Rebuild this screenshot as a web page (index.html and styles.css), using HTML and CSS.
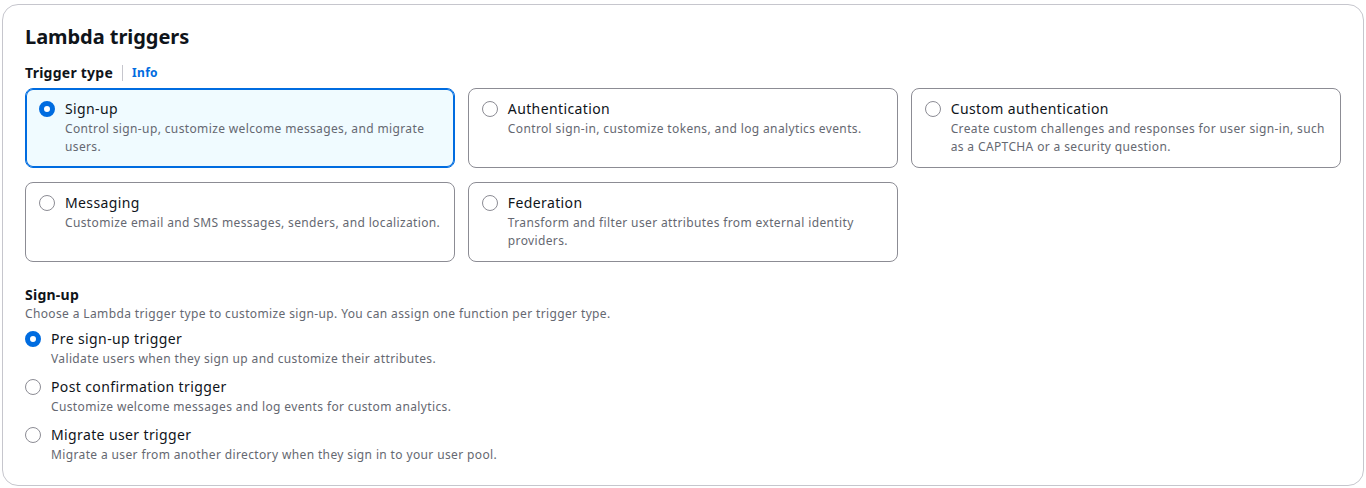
FILE: index.html
```html
<!DOCTYPE html>
<html lang="en">
<head>
<meta charset="utf-8">
<title>Lambda triggers</title>
<link rel="stylesheet" href="styles.css">
</head>
<body>
<section class="container">
  <h2 class="title">Lambda triggers</h2>
  <div class="field-label">
    <span class="label-text">Trigger type</span>
    <span class="divider"></span>
    <a class="info" href="#">Info</a>
  </div>
  <div class="tiles">
    <label class="tile selected">
      <span class="radio checked"></span>
      <span class="tile-body">
        <span class="tile-title">Sign-up</span>
        <span class="tile-desc">Control sign-up, customize welcome messages, and migrate users.</span>
      </span>
    </label>
    <label class="tile">
      <span class="radio"></span>
      <span class="tile-body">
        <span class="tile-title">Authentication</span>
        <span class="tile-desc">Control sign-in, customize tokens, and log analytics events.</span>
      </span>
    </label>
    <label class="tile">
      <span class="radio"></span>
      <span class="tile-body">
        <span class="tile-title">Custom authentication</span>
        <span class="tile-desc">Create custom challenges and responses for user sign-in, such as a CAPTCHA or a security question.</span>
      </span>
    </label>
    <label class="tile">
      <span class="radio"></span>
      <span class="tile-body">
        <span class="tile-title">Messaging</span>
        <span class="tile-desc">Customize email and SMS messages, senders, and localization.</span>
      </span>
    </label>
    <label class="tile">
      <span class="radio"></span>
      <span class="tile-body">
        <span class="tile-title">Federation</span>
        <span class="tile-desc">Transform and filter user attributes from external identity providers.</span>
      </span>
    </label>
  </div>

  <div class="group">
    <div class="group-title">Sign-up</div>
    <div class="group-desc">Choose a Lambda trigger type to customize sign-up. You can assign one function per trigger type.</div>
    <div class="options">
      <label class="option">
        <span class="radio checked"></span>
        <span class="tile-body">
          <span class="tile-title">Pre sign-up trigger</span>
          <span class="tile-desc">Validate users when they sign up and customize their attributes.</span>
        </span>
      </label>
      <label class="option">
        <span class="radio"></span>
        <span class="tile-body">
          <span class="tile-title">Post confirmation trigger</span>
          <span class="tile-desc">Customize welcome messages and log events for custom analytics.</span>
        </span>
      </label>
      <label class="option">
        <span class="radio"></span>
        <span class="tile-body">
          <span class="tile-title">Migrate user trigger</span>
          <span class="tile-desc">Migrate a user from another directory when they sign in to your user pool.</span>
        </span>
      </label>
    </div>
  </div>
</section>
</body>
</html>
```
FILE: styles.css
```css
* { box-sizing: border-box; }
html, body { margin: 0; padding: 0; background: #ffffff; }
body {
  font-family: "Noto Sans", "Open Sans", Arial, sans-serif;
  color: #0f141a;
  padding: 4px 2px 0 2px;
}
.container {
  border: 1px solid #c6c6cd;
  border-radius: 16px;
  padding: 20px 22px 18px 22px;
  height: 482px;
}
.title {
  margin: 0;
  font-size: 20px;
  line-height: 24px;
  font-weight: 700;
  letter-spacing: -0.05px;
}
.field-label {
  display: flex;
  align-items: center;
  margin-top: 13px;
  height: 22px;
}
.label-text {
  font-size: 14px;
  font-weight: 700;
  line-height: 22px;
  letter-spacing: 0.25px;
}
.divider {
  width: 1px;
  height: 16px;
  background: #c6c6cd;
  margin: 0 9px 0 9px;
}
.info {
  font-size: 12px;
  font-weight: 700;
  color: #006ce0;
  text-decoration: none;
  line-height: 22px;
  letter-spacing: 0.3px;
}
.tiles {
  margin-top: 4px;
  display: grid;
  grid-template-columns: repeat(3, 1fr);
  column-gap: 12.5px;
  row-gap: 14px;
}
.tile {
  display: flex;
  gap: 10px;
  border: 1px solid #8c8c94;
  border-radius: 8px;
  padding: 9px 13px 11px 13px;
  min-height: 80px;
  background: #fff;
}
.tile.selected {
  border-color: #006ce0;
  box-shadow: inset 0 0 0 1px #006ce0;
  background: #f0fbff;
}
.radio {
  flex: none;
  width: 16px;
  height: 16px;
  margin-top: 3px;
  border-radius: 50%;
  border: 1px solid #8c8c94;
  background: #fff;
}
.radio.checked {
  border: 5px solid #006ce0;
  background: #fff;
}
.tile-body {
  display: flex;
  flex-direction: column;
}
.tile-title {
  font-size: 14px;
  line-height: 22px;
  letter-spacing: 0.38px;
}
.tile-desc {
  font-size: 12px;
  line-height: 18px;
  color: #656871;
  letter-spacing: 0.37px;
}
.group {
  margin-top: 22px;
}
.group-title {
  font-size: 14px;
  font-weight: 700;
  line-height: 22px;
  letter-spacing: 0.25px;
}
.group-desc {
  font-size: 12px;
  line-height: 16px;
  color: #656871;
  letter-spacing: 0.37px;
}
.options {
  margin-top: 6px;
  display: flex;
  flex-direction: column;
  gap: 8px;
}
.option {
  display: flex;
  gap: 10px;
}
```
